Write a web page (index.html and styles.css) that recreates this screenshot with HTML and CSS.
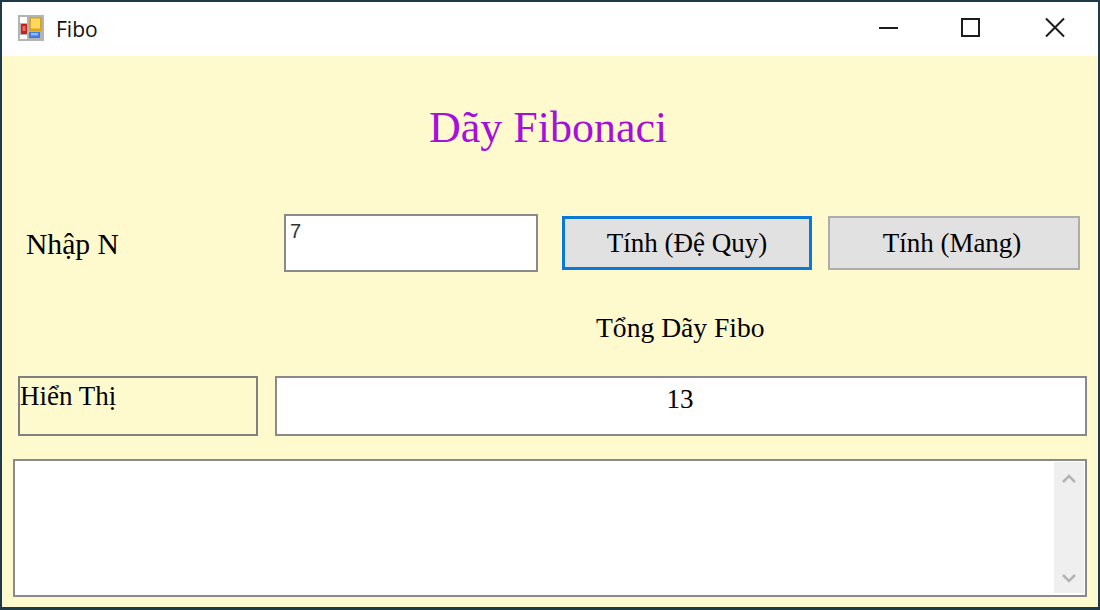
FILE: index.html
```html
<!DOCTYPE html>
<html lang="en">
<head>
  <meta charset="UTF-8" />
  <title>Fibo</title>
  <link rel="stylesheet" href="styles.css">
</head>
<body>
  <div class="window">
    <div class="titlebar">
      <svg class="app-icon" width="26" height="26" viewBox="0 0 26 26">
        <rect width="26" height="26" fill="#b4b4b4"/>
        <rect x="2" y="2" width="7" height="6" fill="#fff"/>
        <rect x="3" y="9" width="6" height="10" fill="#c8201c"/>
        <rect x="4.5" y="11" width="3" height="5" fill="#ee6a60"/>
        <rect x="2" y="20" width="7" height="4" fill="#fff"/>
        <rect x="11" y="2" width="13" height="14" fill="#dba51c"/>
        <rect x="13" y="3.5" width="9" height="10" fill="#ffd860"/>
        <rect x="11" y="17" width="11" height="6" fill="#3f7be0"/>
        <rect x="13" y="18" width="7" height="2.5" fill="#8fbcf4"/>
      </svg>
      <span class="app-title">Fibo</span>
      <div class="controls">
        <svg width="82" height="24" viewBox="0 0 82 24"><path d="M0 11H19" stroke="#1c1c1c" stroke-width="2" fill="none"/></svg>
        <svg width="84" height="24" viewBox="0 0 84 24"><rect x="1" y="2" width="17" height="17" stroke="#1c1c1c" stroke-width="2" fill="none"/></svg>
        <svg width="20" height="24" viewBox="0 0 20 24"><path d="M1 1.5L19 19.5M19 1.5L1 19.5" stroke="#1c1c1c" stroke-width="2" fill="none"/></svg>
      </div>
    </div>

    <div class="form">
      <h1 class="heading">Dãy Fibonaci</h1>

      <div class="row-input">
        <label class="label-n" for="n">Nhập N</label>
        <input class="input-n" id="n" type="text" value="7" />
        <button class="btn btn-focus" type="button">Tính (Đệ Quy)</button>
        <button class="btn btn-plain" type="button">Tính (Mang)</button>
      </div>

      <div class="sum-label">Tổng Dãy Fibo</div>

      <div class="row-result">
        <div class="show-box">Hiển Thị</div>
        <div class="result-box">13</div>
      </div>

      <div class="output">
        <div class="scrollbar">
          <svg width="16" height="12" viewBox="0 0 16 12"><path d="M2 10L8 4L14 10" stroke="#b4b4b4" stroke-width="2.5" fill="none"/></svg>
          <svg width="16" height="12" viewBox="0 0 16 12"><path d="M2 2L8 8L14 2" stroke="#b4b4b4" stroke-width="2.5" fill="none"/></svg>
        </div>
      </div>
    </div>
  </div>
</body>
</html>
```

FILE: styles.css
```css
html, body { margin: 0; padding: 0; }
body { width: 1100px; height: 610px; overflow: hidden; font-family: "Liberation Serif", serif; color: #000; }

.window { box-sizing: border-box; width: 1100px; height: 610px; display: flex; flex-direction: column; background: #fffacd; border: 2px solid #1f3a4a; border-width: 2px 2px 3px 2px; }

.titlebar { height: 54px; flex: none; display: flex; align-items: center; background: #fff; }
.app-icon { margin: 0 0 2px 16px; }
.app-title { margin-left: 12px; font-family: "Open Sans", sans-serif; font-size: 21px; color: #111; }
.controls { margin-left: auto; margin-right: 33px; display: flex; align-items: center; }
.controls svg { display: block; }

.form { flex: 1; }
.heading { margin: 0; padding-left: 427px; padding-top: 44px; height: 112px; box-sizing: border-box; font-weight: normal; font-size: 44px; line-height: 56px; color: #a410dc; }

.row-input { display: flex; align-items: center; height: 58px; margin-top: 46px; }
.label-n { width: 258px; padding: 3px 0 0 24px; box-sizing: border-box; font-size: 29.6px; flex: none; }
.input-n { box-sizing: border-box; width: 254px; height: 58px; margin: 0 24px; padding: 0 0 24px 4px; border: 2px solid #8a8a8a; background: #fff; font-family: "Liberation Sans", sans-serif; font-size: 20px; color: #333; outline: none; }
.btn { box-sizing: border-box; width: 252px; height: 54px; margin-right: 16px; padding: 0; border: 2px solid #adadad; background: #e1e1e1; font-family: "Liberation Serif", serif; font-size: 27px; color: #000; }
.btn-focus { width: 250px; border: 3px solid #0a78d7; }
.btn-plain { padding-right: 4px; }

.sum-label { margin-top: 39px; padding-left: 594px; font-size: 27.6px; line-height: 34px; height: 34px; }

.row-result { display: flex; margin-top: 31px; height: 60px; padding-left: 16px; }
.show-box { box-sizing: border-box; width: 240px; border: 2px solid #808080; font-size: 27px; line-height: 36px; }
.result-box { box-sizing: border-box; width: 812px; margin-left: 17px; padding-right: 2px; border: 2px solid #8a8a8a; background: #fff; text-align: center; font-size: 27px; line-height: 42px; }

.output { box-sizing: border-box; width: 1074px; height: 138px; margin: 23px 0 0 11px; border: 2px solid #8a8a8a; background: #fff; display: flex; justify-content: flex-end; }
.scrollbar { box-sizing: border-box; width: 30px; margin: 1px 1px 2px 0; padding: 10px 0 8px; background: #efefef; display: flex; flex-direction: column; justify-content: space-between; align-items: center; }
```
